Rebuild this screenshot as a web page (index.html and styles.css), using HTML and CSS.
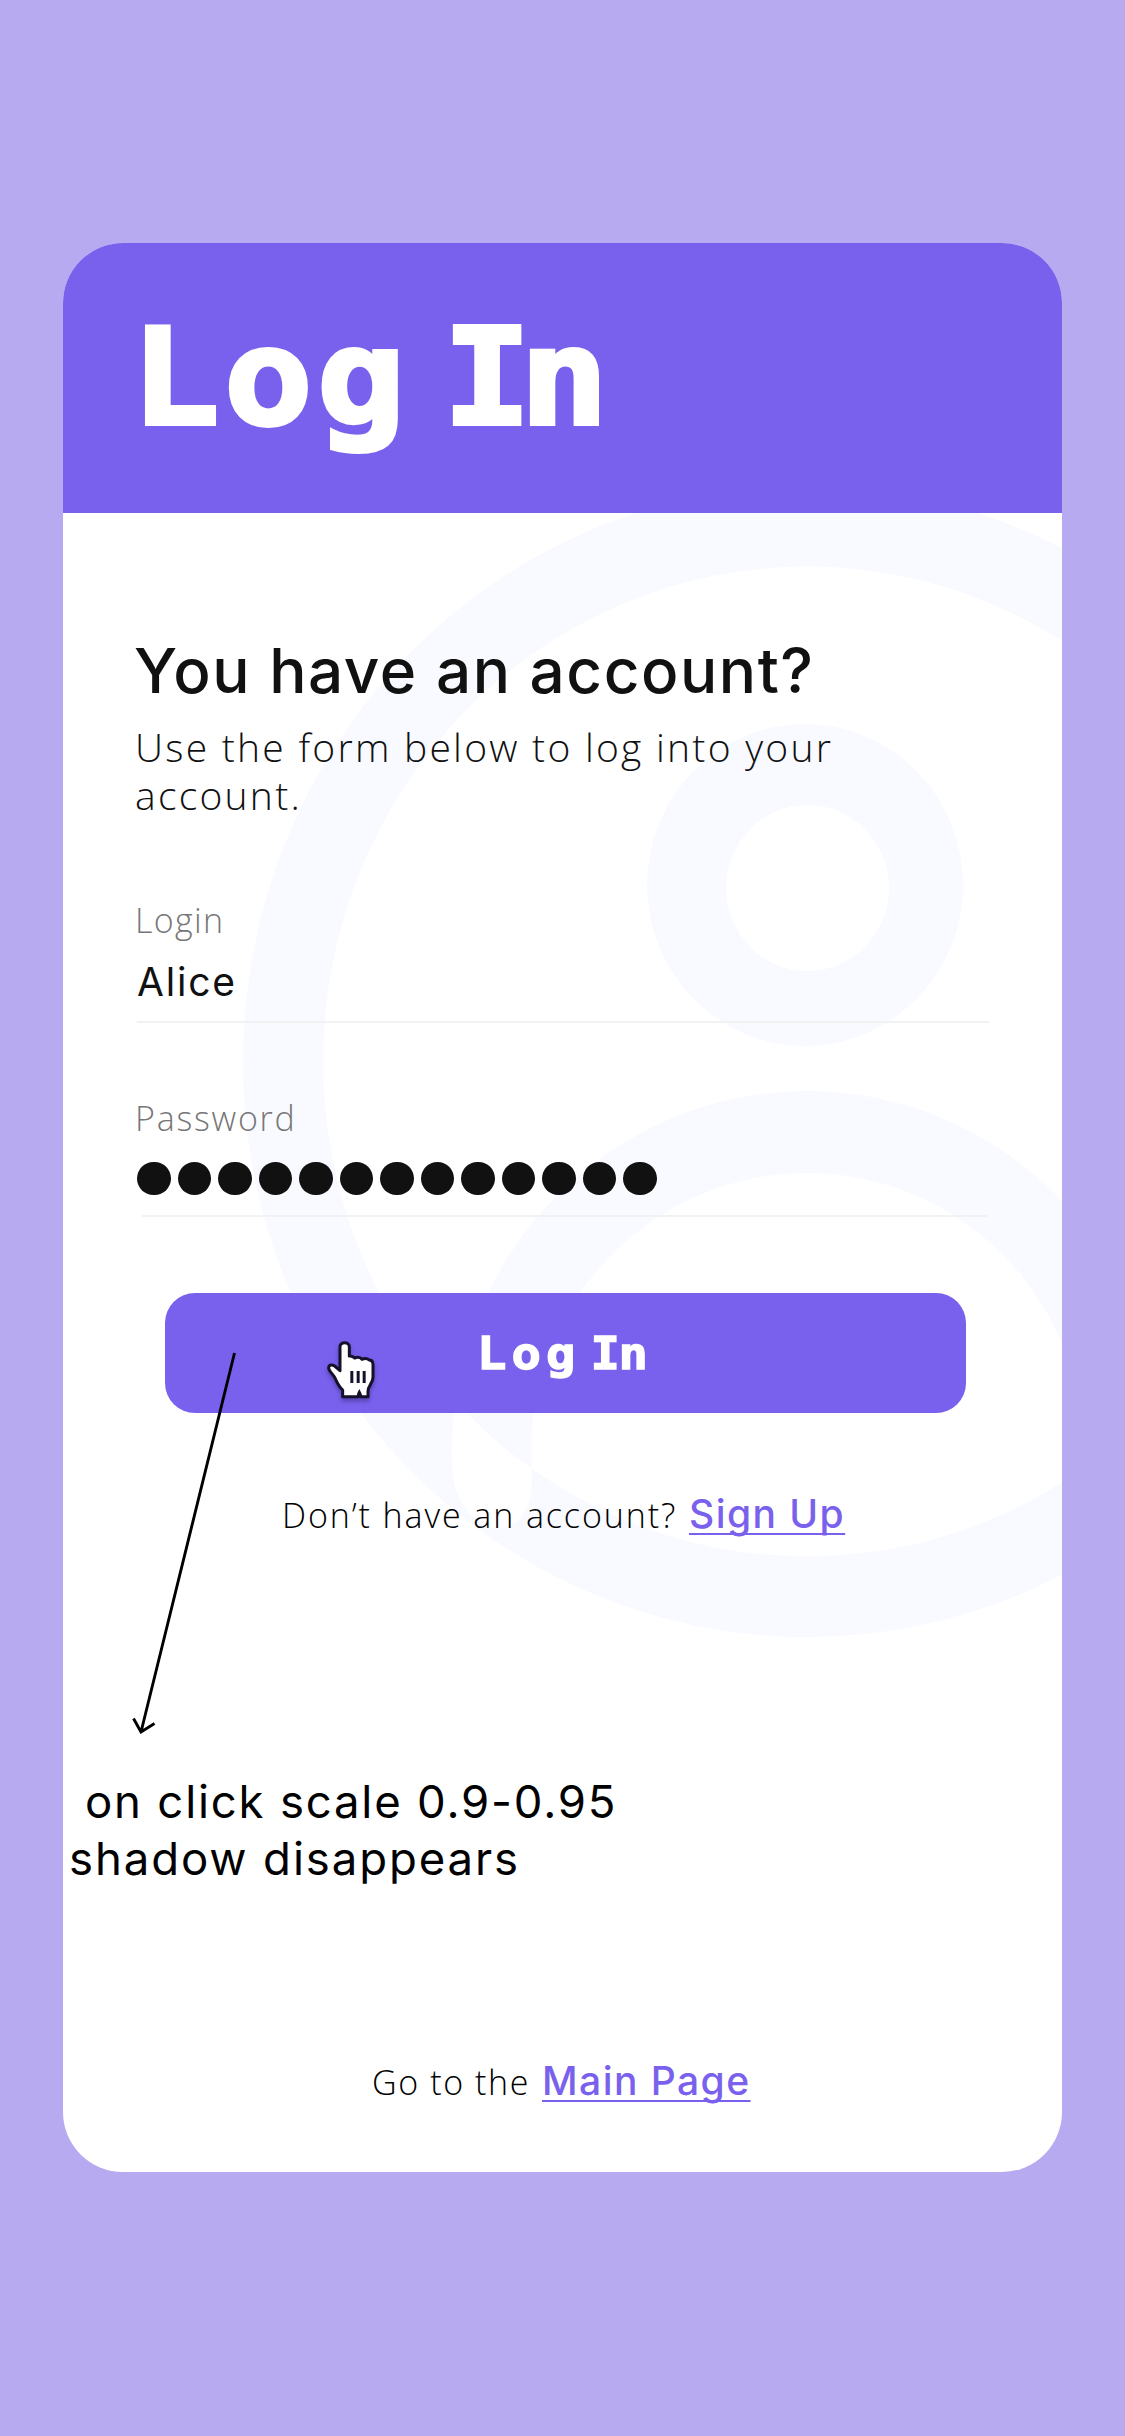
FILE: index.html
```html
<!DOCTYPE html>
<html lang="en">
<head>
<meta charset="utf-8">
<title>Log In</title>
<link rel="stylesheet" href="styles.css">
</head>
<body>
<main class="card">
  <header class="card-header"><h1 class="title">Log <span class="title-i">I</span>n</h1></header>
  <div class="card-body">
    <svg class="watermark" viewBox="63 513 999 1659" aria-hidden="true">
      <path fill="#f9faff" fill-rule="evenodd" d="M243 1061.5a564 575.5 0 1 0 1128 0a564 575.5 0 1 0 -1128 0z M323 1061.5a484 495 0 1 0 968 0a484 495 0 1 0 -968 0z M647 885a158 161 0 1 0 316 0a158 161 0 1 0 -316 0z M726 888a81.5 83 0 1 0 163 0a81.5 83 0 1 0 -163 0z M451.500 1453A355.500 362 0 0 1 1162.500 1453L1084 1453A276.750 280 0 0 0 530.500 1453C533 1482 532.500 1502 522 1516C514 1526 504 1529 494 1528C476 1524 462 1508 456 1490C452.500 1478 451.500 1466 451.500 1453z"/>
    </svg>
    <h2 class="heading">You have an account?</h2>
    <p class="lead">Use the form below to log into your account.</p>
    <form class="form">
      <div class="field">
        <label class="label">Login</label>
        <div class="value">Alice</div>
      </div>
      <div class="field field-password">
        <label class="label label-password">Password</label>
        <div class="dots"><i class="dot"></i><i class="dot"></i><i class="dot"></i><i class="dot"></i><i class="dot"></i><i class="dot"></i><i class="dot"></i><i class="dot"></i><i class="dot"></i><i class="dot"></i><i class="dot"></i><i class="dot"></i><i class="dot"></i></div>
      </div>
      <button class="submit" type="button"><span class="submit-text">Log <span class="submit-i">I</span>n</span></button>
    </form>
    <p class="prompt"><span class="prompt-account">Don’t have an account?</span><a class="link">Sign Up</a></p>
    <div class="note">
      <p class="note-first">on click scale 0.9-0.95</p>
      <p class="note-second">shadow disappears</p>
    </div>
    <p class="prompt prompt-main"><span class="prompt-go">Go to the</span><a class="link">Main Page</a></p>
    <svg class="arrow" width="120" height="390" viewBox="125 1348 120 390" fill="none" stroke="#000" stroke-width="2.900" aria-hidden="true">
      <path d="M234.500 1353L141 1732M133.500 1718.500L141 1732L154.500 1723.500"/>
    </svg>
    <svg class="pointer" width="90" height="100" viewBox="0 0 270 300" aria-hidden="true">
      <path fill="#fff" stroke="#15112b" stroke-width="9" stroke-linejoin="round" d="M98 230V210C86 199 81 187 76 176C70 162 56 154 56 143C57 134 66 133 74 138L90 152V80C90 64 118 64 118 80V108Q128 107 134 114Q148 108 156 118Q168 112 178 120Q188 120 189 132V172C189 190 174 196 174 214V230H154L148 220L143 230Z"/>
      <path fill="#15112b" d="M121 153h9v36h-9zM140 153h9v36h-9zM158 153h9v36h-9zM148 207l6 12v15h-12v-15z"/>
    </svg>
  </div>
</main>
</body>
</html>
```
FILE: styles.css
```css
* { box-sizing: border-box; }

body {
  margin: 0;
  min-height: 2436px;
  padding: 243px 63px 264px;
  background: #b7aaf0;
  color: #111;
  font-family: Inter, "Liberation Sans", sans-serif;
}

h1, h2, p { margin: 0; }

.card {
  height: 1929px;
  border-radius: 60px;
  overflow: hidden;
  background: #fff;
}

.card-header {
  height: 270px;
  padding: 59.500px 0 0 68px;
  background: #7a61ed;
}

.title {
  color: #fff;
  font: bold 134px/150px "DejaVu Sans Mono", monospace;
  letter-spacing: 3.800px;
  word-spacing: -54.600px;
  white-space: nowrap;
  -webkit-text-stroke: 4px #fff;
  transform: scaleX(1.1);
  transform-origin: left;
}

.title-i { letter-spacing: -10.500px; }

.card-body {
  position: relative;
  height: 1659px;
  padding-top: 123px;
}

.watermark {
  position: absolute;
  top: 0;
  left: 0;
  width: 999px;
  height: 1659px;
}

.heading, .lead, .form, .prompt, .note { position: relative; }

.heading {
  padding-left: 71px;
  font-size: 62px;
  font-weight: 500;
  line-height: 69px;
  letter-spacing: 1.550px;
}

.lead {
  width: 800px;
  margin-top: 17.500px;
  padding-left: 72px;
  font: 300 39px/48.500px "Open Sans", sans-serif;
  letter-spacing: 2.250px;
}

.form { padding: 78px 73px 0 74px; }

.field { border-bottom: 2px solid #f2f2f3; }

.field-password {
  margin: 73px 1px 0 5px;
}

.label {
  display: block;
  margin-left: -2px;
  color: #777;
  font: 300 34px/44px "Open Sans", sans-serif;
  letter-spacing: 1.300px;
}

.label-password {
  margin-left: -7px;
  letter-spacing: 1.750px;
}

.value {
  padding: 15px 0 14px;
  font-size: 39px;
  line-height: 50px;
  letter-spacing: 1.800px;
}

.dots {
  display: flex;
  gap: 7.030px;
  margin-left: -5px;
  padding: 22px 0 19.500px;
}

.dot {
  width: 33.500px;
  height: 33.500px;
  border-radius: 50%;
  background: #111;
}

.submit {
  display: block;
  width: 801px;
  height: 120px;
  margin: 76px 0 0 28px;
  padding: 3px 2px 0 0;
  border: 0;
  border-radius: 30px;
  background: #7a61ed;
  color: #fff;
  font: bold 44.500px/54px "DejaVu Sans Mono", monospace;
}

.submit-text {
  display: inline-block;
  letter-spacing: 4.600px;
  word-spacing: -22.300px;
  -webkit-text-stroke: 1.300px #fff;
  transform: scaleX(1.1);
}

.submit-i { letter-spacing: -1.500px; }

.prompt {
  display: flex;
  align-items: baseline;
  margin-top: 76px;
  padding-left: 219px;
  color: #000;
  line-height: 50px;
}

.prompt-account, .prompt-go {
  width: 407px;
  font: 300 34px/50px "Open Sans", sans-serif;
  letter-spacing: 1.900px;
}

.prompt-main {
  margin-top: 168.500px;
  padding-left: 309px;
}

.prompt-go {
  width: 170px;
  letter-spacing: 1.600px;
}

.link {
  color: #7a61ed;
  font-size: 39px;
  font-weight: 500;
  letter-spacing: 1.450px;
  text-decoration: underline;
  text-decoration-thickness: 2px;
  text-decoration-skip-ink: none;
  text-underline-offset: 5px;
}

.note {
  margin-top: 233.500px;
  padding-left: 6px;
  color: #000;
  font-size: 45.500px;
  line-height: 57px;
}

.note-first {
  padding-left: 16px;
  letter-spacing: 1.800px;
}

.note-second { letter-spacing: 1.900px; }

.arrow {
  position: absolute;
  top: 835px;
  left: 61.500px;
}

.pointer {
  position: absolute;
  top: 807px;
  left: 247px;
  filter: drop-shadow(0 3px 2px rgba(20, 10, 60, .35));
}
```
